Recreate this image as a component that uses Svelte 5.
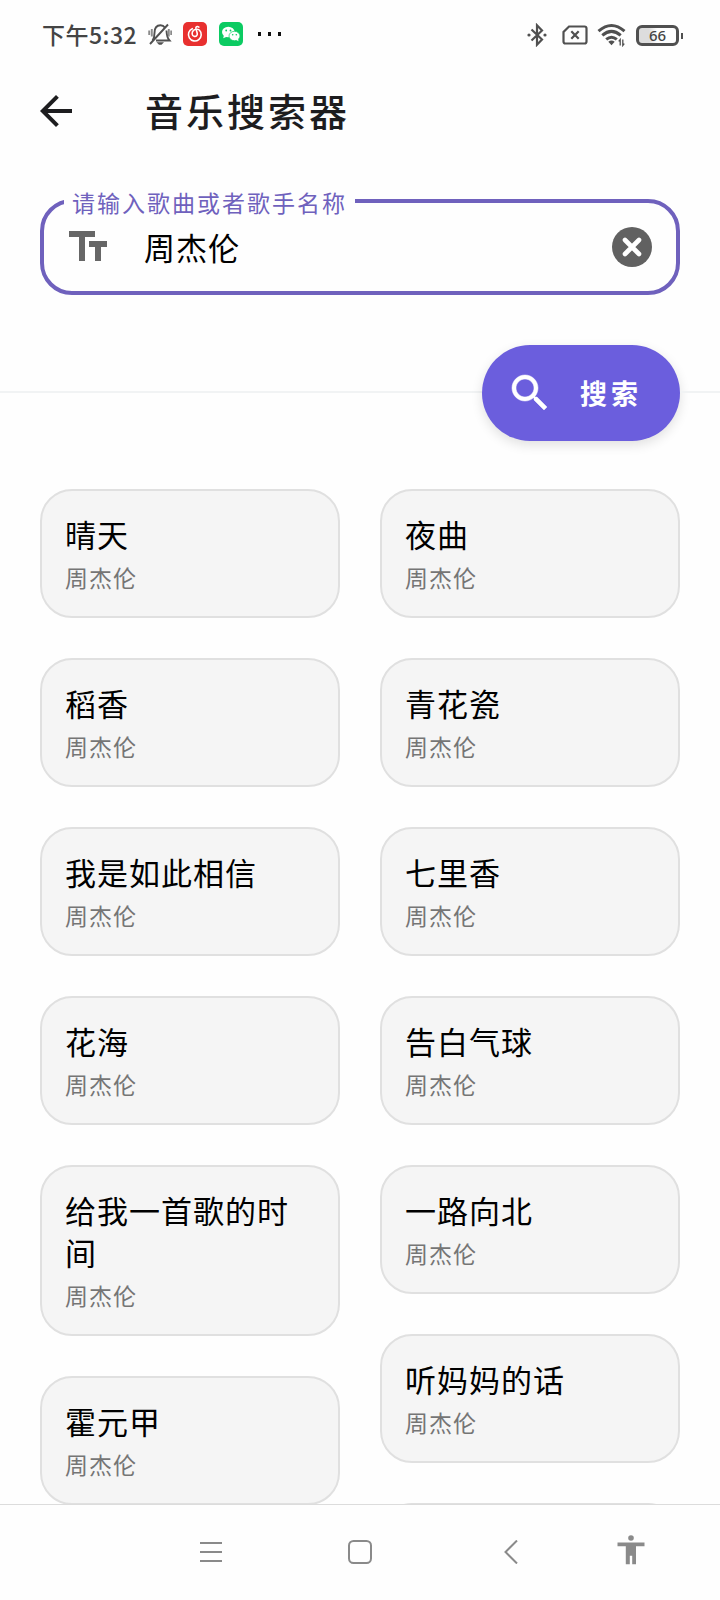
<script>
    let keyword = "周杰伦";

    /**
     * @typedef {Object} Song
     * @property {string} title
     * @property {string} singer
     */

    const singer = "周杰伦";
    const toSong = (title) => ({ title, singer });

    /** @type {Song[][]} */
    const columns = [
        ["晴天", "稻香", "我是如此相信", "花海", "给我一首歌的时间", "霍元甲"].map(toSong),
        ["夜曲", "青花瓷", "七里香", "告白气球", "一路向北", "听妈妈的话"].map(toSong),
    ];

    const clearKeyword = () => {
        keyword = "";
    }
</script>

<div class="screen">
    <div class="status-bar">
        <span class="clock">下午5:32</span>
        <svg class="bell" width="24" height="24" viewBox="0 0 24 24">
            <path d="M4.500 18.500C6.500 16 6.500 14 6.500 11c0-5 2-7.700 6-7.700 2 0 3.500 1 4.500 2.500M18.500 8.500c.2 5 .7 7.500 3 10H8M2 22L20 2.500" />
            <path class="waves" d="M1.200 8.500v4.500M3.800 7v7.500M20.800 7v7.500M23.200 8.500v4.500" />
            <path class="solid" d="M8.500 20.300h7.500l-2.500 2.500h-2.500z" />
        </svg>
        <svg class="netease" width="24" height="24" viewBox="0 0 24 24">
            <rect width="24" height="24" rx="5" fill="#e8302f" />
            <path d="M9.300 6.700a6.400 6.400 0 1 0 7 1.300c-1.500-1.200-4.200-1.100-5.800.4-2 1.900-1.900 5.600.9 6 2.200.3 3.200-1.600 2.800-3.200l-1.300-4.700c-.4-1.800 1.300-2.500 3-1.400" />
        </svg>
        <svg class="wechat" width="24" height="24" viewBox="0 0 24 24">
            <rect width="24" height="24" rx="5" fill="#0bcb62" />
            <g fill="#fff">
                <ellipse cx="9.300" cy="10" rx="6.300" ry="5.300" />
                <path d="M5 13l-.8 3.200 3.500-1.500z" />
            </g>
            <ellipse cx="15.500" cy="14" rx="5.500" ry="4.700" fill="#fff" stroke="#0bcb62" stroke-width=".7" />
            <path d="M17 17.800l2.500 1.500-.5-2.700z" fill="#fff" />
            <g fill="#0bcb62">
                <circle cx="7.200" cy="8.500" r=".9" />
                <circle cx="11.500" cy="8.500" r=".9" />
                <circle cx="13.700" cy="12.800" r=".8" />
                <circle cx="17.300" cy="12.800" r=".8" />
            </g>
        </svg>
        <svg class="more" width="24" height="4" viewBox="0 0 24 4">
            <path d="M0 0h3v4H0zM10 0h3v4h-3zM20 0h3v4h-3z" fill="#111" />
        </svg>

        <div class="signals">
            <svg width="20" height="24" viewBox="0 0 20 24">
                <path d="M4.500 6.500L15 16.500l-5 5.200V2.300l5 5.200L4.500 17.500" />
                <circle class="solid" cx="2" cy="12" r="1.600" />
                <circle class="solid" cx="18" cy="12" r="1.600" />
            </svg>
            <svg width="26" height="20" viewBox="0 0 26 20">
                <path d="M7 1.500h15.500q2 0 2 2v13q0 2-2 2h-19q-2 0-2-2V7z" />
                <path d="M9.300 6.200l7.400 7.600M16.700 6.200l-7.400 7.600" />
            </svg>
            <svg width="29" height="24" viewBox="0 0 29 24">
                <path class="arcs" d="M1.500 8.200Q14.500-3.200 27.500 8.200M5.300 12.400q9.200-8 18.400 0M9.200 16.400q5.300-4.400 10.600 0" />
                <path class="solid" d="M11.300 18.800q3.200-2.400 6.400 0l-3.200 3.400z" />
                <path class="arrows" d="M23.200 22.500v-6l-1.500 1.800M25.800 16.500v6l1.500-1.800" />
            </svg>
            <div class="battery"><span>66</span></div>
        </div>
    </div>

    <header>
        <svg width="48" height="48" viewBox="0 0 24 24">
            <path d="M20 11H7.830l5.590-5.590L12 4l-8 8 8 8 1.410-1.410L7.830 13H20v-2z" fill="#1d1d1f" />
        </svg>
        <h1>音乐搜索器</h1>
    </header>

    <fieldset class="text-field">
        <legend>请输入歌曲或者歌手名称</legend>
        <svg width="48" height="48" viewBox="0 0 24 24">
            <path d="M2.500 4v3h5v12h3V7h5V4h-13zm19 5h-9v3h3v7h3v-7h3V9z" fill="#666" />
        </svg>
        <input type="text" bind:value={keyword} />
        <button class="clear" on:click={clearKeyword} aria-label="clear">
            <svg width="48" height="48" viewBox="0 0 48 48">
                <circle cx="24" cy="24" r="20" fill="#616161" />
                <path d="M17 17l14 14M31 17l-14 14" stroke="#fff" stroke-width="4.600" stroke-linecap="round" />
            </svg>
        </button>
    </fieldset>

    <div class="search-row">
        <div class="rule"></div>
        <button class="search">
            <svg width="48" height="48" viewBox="0 0 24 24">
                <path d="M15.500 14h-.79l-.28-.27C15.410 12.590 16 11.110 16 9.500 16 5.910 13.090 3 9.500 3S3 5.910 3 9.500 5.910 16 9.500 16c1.610 0 3.090-.59 4.230-1.570l.27.28v.79l5 4.990L20.490 19l-4.990-5zm-6 0C7.010 14 5 11.990 5 9.500S7.010 5 9.500 5 14 7.010 14 9.500 11.990 14 9.500 14z" fill="#fff" stroke="#fff" stroke-width=".25" />
            </svg>
            <span>搜索</span>
        </button>
        <div class="rule end"></div>
    </div>

    <main>
        {#each columns as songs, i}
            <div class="column">
                {#each songs as song}
                    <div class="card">
                        <h3>{song.title}</h3>
                        <p>{song.singer}</p>
                    </div>
                {/each}
                {#if i === 1}
                    <!-- next result, still below the fold -->
                    <div class="card"></div>
                {/if}
            </div>
        {/each}
    </main>

    <nav>
        <svg class="menu" width="24" height="24" viewBox="0 0 24 24">
            <path d="M1 3h22M1 12h22M1 21h22" />
        </svg>
        <svg class="home" width="24" height="24" viewBox="0 0 24 24">
            <rect x="1" y="1" width="22" height="22" rx="4.500" />
        </svg>
        <svg class="back" width="14" height="24" viewBox="0 0 14 24">
            <path d="M13 .5L1.500 12 13 23.500" />
        </svg>
        <svg class="person" width="28" height="30" viewBox="0 0 28 30">
            <circle class="solid" cx="14" cy="3" r="2.800" />
            <path class="solid" d="M.5 7.500h27v3.700h-8.500v18h-3.800v-8.500h-2.400v8.500H8.800v-18H.5z" />
        </svg>
    </nav>
</div>

<style>
    :global(body) {
        background: #fff;
    }

    .screen {
        box-sizing: border-box;
        display: flex;
        flex-direction: column;
        width: 720px;
        height: 1600px;
        overflow: hidden;
        background: #fefefe;
        font-family: "Noto Sans CJK SC", sans-serif;
    }

    svg {
        display: block;
        flex: none;
    }

    button {
        border: none;
        background: none;
        padding: 0;
        font-family: inherit;
    }

    /* status bar */
    .status-bar {
        display: flex;
        align-items: center;
        height: 70px;
        padding: 0 38px 0 42px;
        color: #444;
    }

    .status-bar .clock {
        width: 106px;
        margin-top: -2px;
        font-size: 23px;
        font-weight: 500;
        letter-spacing: .5px;
        white-space: nowrap;
    }

    .bell path,
    .signals path {
        fill: none;
        stroke: #505050;
        stroke-width: 2.2;
    }

    .bell path {
        stroke-width: 1.9;
    }

    .bell .waves {
        stroke: #8a8a8a;
    }

    .signals .arcs {
        stroke-width: 3;
    }

    .signals .arrows {
        stroke-width: 1.3;
    }

    .bell .solid,
    .signals .solid {
        fill: #505050;
        stroke: none;
    }

    .bell,
    .netease,
    .wechat,
    .more {
        margin-top: -2px;
    }

    .netease {
        margin-left: 11px;
    }

    .netease path {
        fill: none;
        stroke: #fff;
        stroke-width: 1.6;
        stroke-linecap: round;
    }

    .wechat {
        margin-left: 12px;
    }

    .more {
        margin-left: 15px;
    }

    .signals {
        display: flex;
        align-items: center;
        margin-left: auto;
    }

    .signals svg:nth-child(2) {
        margin-left: 15px;
    }

    .signals svg:nth-child(3) {
        margin: 0 10px 0 9px;
    }

    .battery {
        position: relative;
        box-sizing: border-box;
        width: 43px;
        height: 21px;
        margin-right: 3px;
        border: 3px solid #505050;
        border-radius: 6px;
        background: linear-gradient(90deg, #ddd 0 10px, #fefefe 18px);
        text-align: center;
    }

    .battery span {
        display: block;
        font: 500 15px/15px "Noto Sans", sans-serif;
    }

    .battery::after {
        content: "";
        position: absolute;
        right: -7px;
        top: 5px;
        width: 2px;
        height: 6px;
        background: #505050;
    }

    /* app bar */
    header {
        display: flex;
        align-items: center;
        height: 82px;
        padding-left: 32px;
    }

    header h1 {
        margin: -2px 0 0 65px;
        color: #1d1d1f;
        font-size: 38px;
        font-weight: 500;
        line-height: 56px;
        letter-spacing: 3px;
    }

    /* outlined text field */
    .text-field {
        box-sizing: border-box;
        display: flex;
        align-items: center;
        width: 640px;
        height: 108px;
        margin: 35px 40px 0;
        padding: 8px 20px 0;
        border: 4px solid #6f61bd;
        border-radius: 32px;
    }

    .text-field legend {
        height: 28px;
        padding: 0 8px;
        color: #6f61bd;
        font-size: 23px;
        line-height: 30px;
        letter-spacing: 2px;
    }

    .text-field input {
        flex: 1;
        min-width: 0;
        height: 48px;
        margin: -2px 0 0 32px;
        padding: 0;
        border: none;
        outline: none;
        background: none;
        color: #000;
        font-family: inherit;
        font-size: 31px;
        letter-spacing: 1px;
    }

    /* search button on the divider */
    .search-row {
        display: flex;
        align-items: center;
        height: 96px;
        margin-top: 50px;
    }

    .rule {
        flex: 1;
        height: 2px;
        margin-top: -2px;
        background: #f1f3f4;
    }

    .rule.end {
        flex: none;
        width: 40px;
    }

    .search {
        display: flex;
        align-items: center;
        width: 198px;
        height: 96px;
        padding-left: 24px;
        border-radius: 48px;
        background: #6b5edd;
        box-shadow: 0 4px 12px rgba(0, 0, 0, .12);
        color: #fff;
    }

    .search span {
        margin-left: 26px;
        font-size: 27px;
        font-weight: 700;
        line-height: 40px;
        letter-spacing: 4px;
    }

    /* results */
    main {
        display: flex;
        flex: 1;
        align-items: flex-start;
        gap: 40px;
        min-height: 0;
        padding: 48px 40px 0;
        overflow: hidden;
    }

    .column {
        display: flex;
        flex: 1;
        flex-direction: column;
        gap: 40px;
    }

    .card {
        box-sizing: border-box;
        min-height: 129px;
        padding: 22px 20px 21px 23px;
        border: 2px solid #e0e0e0;
        border-radius: 32px;
        background: #f5f5f5;
    }

    .card h3 {
        margin: 0;
        color: #000;
        font-size: 31px;
        font-weight: 400;
        line-height: 42px;
        letter-spacing: 1px;
    }

    .card p {
        margin: 5px 0 0;
        color: #757575;
        font-size: 23px;
        line-height: 35px;
        letter-spacing: 1px;
    }

    /* system navigation */
    nav {
        display: flex;
        flex: none;
        align-items: center;
        box-sizing: border-box;
        height: 96px;
        padding: 0 75px 2px 199px;
        border-top: 1px solid #dcdcdc;
        background: #fefefe;
    }

    nav path,
    nav rect {
        fill: none;
        stroke: #8a8a8a;
        stroke-width: 2;
    }

    nav .solid {
        fill: #8a8a8a;
        stroke: none;
    }

    .home {
        margin-left: 125px;
    }

    .back {
        margin-left: 132px;
    }

    .person {
        margin: -4px 0 0 auto;
    }
</style>
